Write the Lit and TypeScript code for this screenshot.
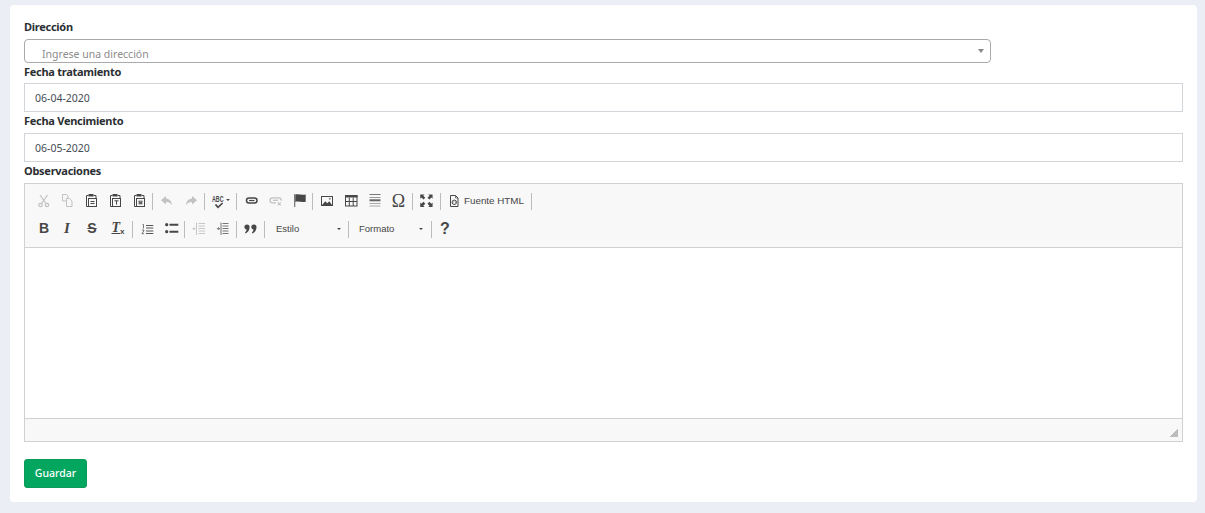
import { LitElement, html, css } from "lit";
import { customElement } from "lit/decorators.js";

const svgIcon = (markup: string) => {
  const t = document.createElement("template");
  t.innerHTML = `<svg xmlns="http://www.w3.org/2000/svg" viewBox="0 0 16 16" width="16" height="16" aria-hidden="true">${markup}</svg>`;
  return t.content.firstChild;
};

const D = "#474747";
const clip = `<path d="M5.500 3.500h-2v11h2M10.500 3.500h2.500v2.500" fill="none" stroke="${D}"/><rect x="5.500" y="2" width="5" height="2.500" fill="${D}"/><rect x="5.500" y="6.500" width="8" height="8" fill="#f8f8f8" stroke="${D}"/>`;
const paths: Record<string, string> = {
  cut: `<g fill="none" stroke="${D}" stroke-width="1.200"><circle cx="5.500" cy="13" r="1.700"/><circle cx="12" cy="13" r="1.700"/><path d="M5 3 11 11.500M12.500 3 6.500 11.500"/></g>`,
  copy: `<g fill="none" stroke="${D}" stroke-width="1"><path d="M3.500 2.500h4l1.500 1.500v5h-5.500z"/><path d="M7.500 6.500h3l2.500 2.500v5.500H7.500z" fill="#f8f8f8"/></g>`,
  paste: `${clip}<path d="M7.500 9.500h4M7.500 11.500h4" stroke="${D}"/>`,
  pastet: `${clip}<path d="M7.500 8.800h4M9.500 8.800v3.800" stroke="${D}"/>`,
  pastew: `${clip}<rect x="7.500" y="8.500" width="4" height="4" fill="#8f8f8f"/><path d="M8 9 8.800 12 9.500 10.500 10.200 12 11 9" fill="none" stroke="${D}" stroke-width=".6"/>`,
  undo: `<path d="M7 4 2 8.300 7 12.500V10c2.700-.1 4.600.8 6 3.200-.2-3.700-2.300-6.200-6-6.700z" fill="${D}"/>`,
  redo: `<path d="M9 4 14 8.300 9 12.500V10c-2.700-.1-4.600.8-6 3.200.2-3.700 2.300-6.200 6-6.700z" fill="${D}"/>`,
  link: `<rect x="3.500" y="6" width="10.500" height="5" rx="2.500" fill="none" stroke="${D}" stroke-width="1.500"/><path d="M6 8.500h5.500" stroke="${D}" stroke-width="1.200"/>`,
  unlink: `<g fill="none" stroke="${D}" stroke-width="1.300"><path d="M9 10.800H5.500a2.500 2.500 0 0 1 0-5h6.500a2.500 2.500 0 0 1 2.200 2.800"/><path d="M6 8.300h5"/><path d="m10.800 10.300 3 3M13.800 10.300l-3 3" stroke-width="1.100"/></g>`,
  flag: `<path d="M3 2h1.300v13H3z" fill="${D}" opacity=".7"/><path d="M4.300 2.700c3.200-1.200 6 .8 10.400-.2v7.300c-4.400 1-7.200-1-10.400.2z" fill="${D}"/>`,
  image: `<rect x="2.500" y="4.500" width="11" height="9" fill="#f8f8f8" stroke="${D}"/><path d="M3 13 6.300 9.300 8.200 11.200 10.300 9.300 13 13z" fill="${D}"/><circle cx="10.800" cy="6.800" r="1" fill="#8a8a8a"/>`,
  table: `<rect x="2.500" y="3.500" width="11.500" height="10.500" fill="#f8f8f8" stroke="${D}"/><rect x="2" y="3" width="12.500" height="2.500" fill="${D}"/><path d="M6.300 5.500v8.500M10.200 5.500v8.500M2.500 9.500h11.500" stroke="${D}"/>`,
  hr: `<path d="M2.500 2.500h11" stroke="#777"/><path d="M2.500 5.500h11" stroke="#999"/><rect x="2.500" y="7.300" width="11" height="2" fill="#666"/><path d="M2.500 11.500h11M2.500 14h11" stroke="#a8a8a8" stroke-width="1.200"/>`,
  max: `<g transform="translate(-.2 1.100) scale(.95)" fill="${D}"><path d="M1.500 1.500H6L4.700 2.800 6.800 4.900 4.900 6.800 2.800 4.700 1.500 6zM14.500 1.500V6L13.200 4.700 11.100 6.800 9.200 4.900 11.300 2.800 10 1.500zM1.500 14.500V10L2.800 11.300 4.900 9.200 6.800 11.100 4.700 13.200 6 14.500zM14.500 14.500H10L11.300 13.200 9.200 11.100 11.100 9.200 13.200 11.300 14.500 10z"/></g>`,
  source: `<path d="M4.500 3.500h5l2.500 2.500v8.500H4.500z" fill="none" stroke="${D}"/><path d="M9.500 3.500V6H12" fill="none" stroke="${D}" stroke-width=".7"/><circle cx="8.300" cy="10.300" r="2.200" fill="none" stroke="${D}"/><path d="M7.700 9.500 6.900 10.300l.8.800M8.900 9.500l.8.800-.8.800" fill="none" stroke="${D}" stroke-width=".6"/>`,
  ol: `<g fill="none" stroke="#555"><path d="M7 5.500h7.300M7 8h7.300M7 11h7.300M7 13.500h7.300" stroke-width="1.200"/><path d="M3.500 4.500h1v4M2.900 10h2v1l-1.900 2.300v.4h2" stroke-width=".8"/></g>`,
  ul: `<g fill="${D}"><circle cx="3.700" cy="4.700" r="1.600"/><circle cx="3.700" cy="11.700" r="1.600"/><path d="M6.500 3.700h8.800v2H6.500zM6.500 10.700h8.800v2H6.500z"/></g>`,
  outdent: `<g fill="none" stroke="${D}" stroke-width=".9"><path d="M5.500 2.500v12.500M7.500 3.500H14M7.500 6H14M7.500 8.500H14M7.500 11H14M7.500 13.500H14"/><path d="M2 8.700h2.500M3.300 7.300 2 8.700l1.300 1.400"/></g>`,
  indent: `<g fill="none" stroke="#666" stroke-width=".9"><path d="M6 2.500v12.500M7.500 3.500H13.500M7.500 6H13.500M7.500 8.500H13.500M7.500 11H13.500M7.500 13.500H13.500"/><path d="M1.800 8.700h2.700M3.300 7.300l1.300 1.400-1.300 1.400"/></g>`,
  quote: `<g fill="${D}"><path d="M1.400 7a2.600 2.600 0 1 1 5.200 0c0 3-1.600 5.300-3.900 6.400l-.7-1c1-.7 1.500-1.700 1.600-2.800C2.400 9.500 1.400 8.400 1.400 7z"/><path transform="translate(6.900 0)" d="M1.400 7a2.600 2.600 0 1 1 5.200 0c0 3-1.600 5.300-3.900 6.400l-.7-1c1-.7 1.500-1.700 1.600-2.800C2.400 9.500 1.400 8.400 1.400 7z"/></g>`,
  check: `<path d="M4.500 11.500 7 14.300 11.600 10" fill="none" stroke="${D}" stroke-width="1.700"/>`,
};

@customElement("app-root")
export class AppRoot extends LitElement {
  static styles = css`
    :host { display: block; min-height: 513px; box-sizing: border-box; padding: 5px 8px 11px 10px; background: #ebeef4; font-family: "Noto Sans", sans-serif; color: #2f3338; }
    * { box-sizing: border-box; }
    .card { background: #fff; border-radius: 4px; padding: 13px 14px 14px; height: 497px; display: flex; flex-direction: column; }
    .label { font-size: 11px; font-weight: 700; line-height: 18px; height: 18px; letter-spacing: -0.27px; margin-bottom: 3px; color: #2b2f33; }
    .label.tight { margin-bottom: 2px; }
    .select { height: 24px; width: 967px; border: 1px solid #aaa; border-radius: 4px; display: flex; align-items: flex-end; justify-content: space-between; padding: 0 6px 0 17px; }
    .placeholder { font-size: 10.5px; line-height: 16px; color: #8c8c8c; }
    .caret { width: 0; height: 0; border-left: 3.500px solid transparent; border-right: 3.500px solid transparent; border-top: 4px solid #888; margin: 0 0 9px; }
    .input { height: 29px; border: 1px solid #d1d5d9; padding: 0 10px; font-size: 10.5px; line-height: 28px; color: #444c54; }
    .editor { height: 259px; border: 1px solid #d1d1d1; display: flex; flex-direction: column; }
    .toolbar { height: 64px; background: #f8f8f8; border-bottom: 1px solid #d1d1d1; padding: 2px 6px 0; }
    .row { display: flex; height: 28px; align-items: center; }
    .b { width: 24px; height: 24px; display: flex; align-items: center; justify-content: center; flex: none; }
    .b.off svg { opacity: 0.3; }
    .b.tx { width: 28px; }
    .b.spell { width: 28px; position: relative; }
    .sep { width: 4px; height: 17px; margin-top: 2px; flex: none; padding-left: 1px; }
    .sep::before { content: ""; display: block; width: 1px; height: 100%; background: #bcbcbc; }
    .source { width: 87px; display: flex; align-items: center; padding-left: 3px; gap: 2px; font: 9.800px/16px "Liberation Sans", sans-serif; color: #474747; flex: none; }
    .source span { padding-top: 1px; }
    .combo { width: 80px; display: flex; align-items: center; justify-content: space-between; padding: 1px 6px 0 9px; font: 9.500px/16px "Liberation Sans", sans-serif; color: #474747; flex: none; }
    .combo.f { width: 79px; padding: 1px 7px 0 8px; }
    .mini { width: 0; height: 0; border-left: 2.500px solid transparent; border-right: 2.500px solid transparent; border-top: 2.500px solid #474747; }
    .spellmini { position: absolute; right: 5px; top: 11px; }
    .abc { position: absolute; left: 5px; top: 6px; font: 700 9.500px/9px "Liberation Sans", sans-serif; color: #474747; transform: scaleX(0.56); transform-origin: left center; }
    .checkmark { position: absolute; left: 4px; top: 4px; }
    .glyph { font-family: "Liberation Sans", sans-serif; font-weight: 700; font-size: 14px; line-height: 16px; color: #474747; }
    .glyph.b1 { margin-left: 2px; }
    .glyph.i { font-family: "Liberation Serif", serif; font-style: italic; font-size: 15px; }
    .glyph.s { text-decoration: line-through; margin-left: 2px; }
    .glyph.t { font-family: "Liberation Serif", serif; font-style: italic; text-decoration: underline; margin-left: 2px; }
    .glyph.t small { font: 700 8px/8px "Liberation Sans", sans-serif; vertical-align: -2px; display: inline-block; }
    .glyph.o { font-family: "Liberation Serif", serif; font-weight: 400; font-size: 18px; margin: 1px 0 0 -1px; }
    .glyph.q { font-size: 16px; margin: 2px 2px 0 0; }
    .content { flex: 1; background: #fff; }
    .foot { height: 23px; background: #f8f8f8; border-top: 1px solid #d1d1d1; display: flex; justify-content: flex-end; align-items: flex-end; padding: 0 4px 4px 0; }
    .grip { width: 8px; height: 8px; background: linear-gradient(135deg, transparent 50%, #bdbdbd 50%); }
    .actions { margin-top: 17px; }
    .save { display: inline-block; width: 63px; height: 29px; background: #03a65f; border: 1px solid #0a9a59; border-radius: 3px; color: #fff; font: 500 10.500px/27px "Noto Sans", sans-serif; text-align: center; }
  `;

  private btn(name: string, off = false) {
    return html`<span class="b ${off ? "off" : ""}">${svgIcon(paths[name])}</span>`;
  }
  private txt(content: unknown, cls = "", wrap = "") {
    return html`<span class="b ${wrap}"><span class="glyph ${cls}">${content}</span></span>`;
  }

  render() {
    const sep = html`<span class="sep"></span>`;
    return html`
      <div class="card">
        <div class="label">Dirección</div>
        <div class="select"><span class="placeholder">Ingrese una dirección</span><span class="caret"></span></div>
        <div class="label tight">Fecha tratamiento</div>
        <div class="input">06-04-2020</div>
        <div class="label">Fecha Vencimiento</div>
        <div class="input">06-05-2020</div>
        <div class="label">Observaciones</div>
        <div class="editor">
          <div class="toolbar">
            <div class="row">
              ${this.btn("cut", true)}${this.btn("copy", true)}${this.btn("paste")}${this.btn("pastet")}${this.btn("pastew")}
              ${sep}
              ${this.btn("undo", true)}${this.btn("redo", true)}
              ${sep}
              <span class="b spell"><span class="abc">ABC</span><span class="checkmark">${svgIcon(paths.check)}</span><span class="mini spellmini"></span></span>
              ${sep}
              ${this.btn("link")}${this.btn("unlink", true)}${this.btn("flag")}
              ${sep}
              ${this.btn("image")}${this.btn("table")}${this.btn("hr")}${this.txt("Ω", "o")}
              ${sep}
              ${this.btn("max")}
              ${sep}
              <span class="source">${svgIcon(paths.source)}<span>Fuente HTML</span></span>
              ${sep}
            </div>
            <div class="row">
              ${this.txt("B", "b1")}${this.txt("I", "i")}${this.txt("S", "s")}${this.txt(html`T<small>x</small>`, "t", "tx")}
              ${sep}
              ${this.btn("ol")}${this.btn("ul")}
              ${sep}
              ${this.btn("outdent", true)}${this.btn("indent")}
              ${sep}
              ${this.btn("quote")}
              ${sep}
              <span class="combo"><span>Estilo</span><span class="mini"></span></span>
              ${sep}
              <span class="combo f"><span>Formato</span><span class="mini"></span></span>
              ${sep}
              ${this.txt("?", "q")}
            </div>
          </div>
          <div class="content"></div>
          <div class="foot"><span class="grip"></span></div>
        </div>
        <div class="actions"><span class="save">Guardar</span></div>
      </div>
    `;
  }
}
